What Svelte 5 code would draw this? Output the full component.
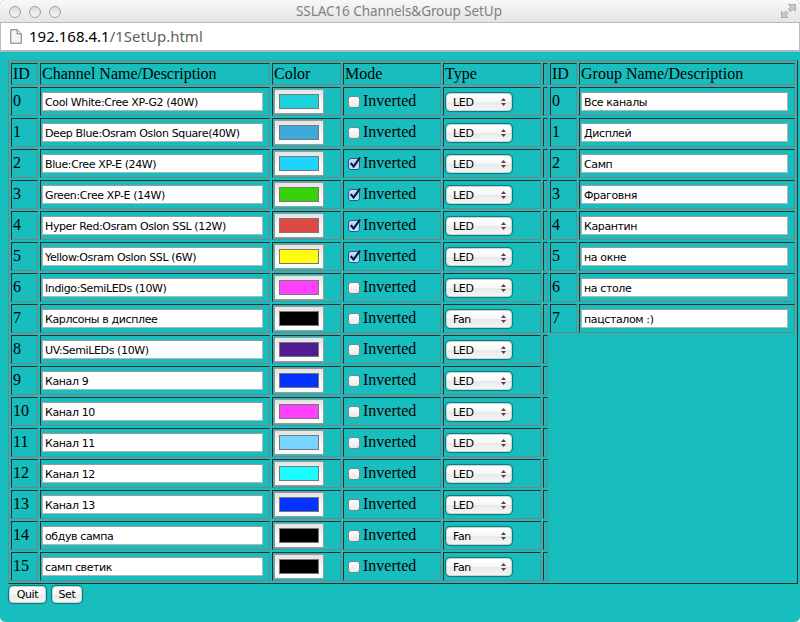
<script>
  const channels = [
    ['Cool White:Cree XP-G2 (40W)', '#1cd3dc', false, 'LED'],
    ['Deep Blue:Osram Oslon Square(40W)', '#3fa9dc', false, 'LED'],
    ['Blue:Cree XP-E (24W)', '#1fd3ff', true, 'LED'],
    ['Green:Cree XP-E (14W)', '#37d20a', true, 'LED'],
    ['Hyper Red:Osram Oslon SSL (12W)', '#dc4b41', true, 'LED'],
    ['Yellow:Osram Oslon SSL (6W)', '#fffd0b', true, 'LED'],
    ['Indigo:SemiLEDs (10W)', '#ff40ff', false, 'LED'],
    ['Карлсоны в дисплее', '#000000', false, 'Fan'],
    ['UV:SemiLEDs (10W)', '#531b93', false, 'LED'],
    ['Канал 9', '#0433ff', false, 'LED'],
    ['Канал 10', '#ff40ff', false, 'LED'],
    ['Канал 11', '#76d6ff', false, 'LED'],
    ['Канал 12', '#1cfdff', false, 'LED'],
    ['Канал 13', '#0433ff', false, 'LED'],
    ['обдув сампа', '#000000', false, 'Fan'],
    ['самп светик', '#000000', false, 'Fan']
  ];
  const groups = ['Все каналы', 'Дисплей', 'Самп', 'Фраговня', 'Карантин', 'на окне', 'на столе', 'пацсталом :)'];
</script>

<div class="window">
  <header class="titlebar">
    <div class="lights"><i></i><i></i><i></i></div>
    <span class="title">SSLAC16 Channels&amp;Group SetUp</span>
    <svg class="full" width="15" height="15" viewBox="0 0 15 15">
      <path d="M7.500 .5H14.500V7L12.300 5.200 9.500 7.600 7.200 5.200 9.700 2.800zM.5 7.500 2.500 9.300 4.800 7 7.200 9.400 5 11.700 7 13.500H.5z" fill="#c9c9c9" stroke="#a0a0a0" stroke-width=".8" />
    </svg>
  </header>
  <div class="address">
    <svg width="12" height="15" viewBox="0 0 12 15">
      <path d="M.75.75H7.300L11.250 4.700V14.250H.75z" fill="#f4f4f4" stroke="#777" />
      <path d="M7.200.8V4.800H11.200" fill="#fff" stroke="#777" />
    </svg>
    <span class="url">192.168.4.1<em>/1SetUp.html</em></span>
  </div>
  <main>
    <div class="table">
      <div class="cell">ID</div>
      <div class="cell">Channel Name/Description</div>
      <div class="cell">Color</div>
      <div class="cell">Mode</div>
      <div class="cell">Type</div>
      <div class="cell"></div>
      <div class="cell">ID</div>
      <div class="cell">Group Name/Description</div>
      {#each channels as [name, color, inverted, type], i}
        <div class="cell id">{i}</div>
        <div class="cell field"><input class="text" value={name} /></div>
        <div class="cell"><button class="color" aria-label="Color"><span style:background={color}></span></button></div>
        <div class="cell mode">
          <span class="check" class:on={inverted}>
            {#if inverted}
              <svg width="14" height="14" viewBox="0 0 14 14"><path d="M2.800 7.200 5.600 10.600 12 1.500" fill="none" stroke="#0a1530" stroke-width="2.100" /></svg>
            {/if}
          </span>
          <span class="label">Inverted</span>
        </div>
        <div class="cell type">
          <button class="select">{type}
            <svg width="5" height="8" viewBox="0 0 5 8"><path d="M0 3 2.500 0 5 3zM0 5 2.500 8 5 5z" fill="#4a4a4a" /></svg>
          </button>
        </div>
        <div class="cell"></div>
        {#if i < groups.length}
          <div class="cell id">{i}</div>
          <div class="cell field"><input class="text group" value={groups[i]} /></div>
        {:else}
          <div></div><div></div>
        {/if}
      {/each}
    </div>
    <div class="actions"><button class="quit">Quit</button><button class="set">Set</button></div>
  </main>
</div>

<style>
  :global(body) { background: #fff; overflow: hidden; }
  * { box-sizing: border-box; }
  .window { width: 800px; height: 622px; display: flex; flex-direction: column; overflow: hidden; border-radius: 5px; background: #18bdbe; }
  .titlebar { height: 22px; flex: none; display: flex; align-items: center; padding: 0 4px 0 8px; background: linear-gradient(#f8f8f8, #e5e5e5); }
  .lights { display: flex; gap: 7px; width: 107px; padding: 2px 0 0 1px; }
  .lights i { width: 12px; height: 12px; margin-right: 1px; border: 1px solid #a0a0a0; border-radius: 50%; background: linear-gradient(#dcdcdc, #f5f5f5); }
  .title { font: 13.500px/22px "Noto Sans", sans-serif; letter-spacing: -.07px; color: #808080; white-space: nowrap; margin-left: 181px; }
  .full { margin-left: auto; flex: none; }
  .address { height: 30px; flex: none; display: flex; align-items: center; gap: 7px; padding-left: 9px; background: #fff; border: 1px solid #b5b9c4; border-bottom: 2px solid #aeb6c4; }
  .address svg { flex: none; }
  .url { font: 15px/28px "Noto Sans", sans-serif; color: #000; white-space: nowrap; padding-bottom: 2px; }
  .url em { font-style: normal; color: #5f635c; }
  main { padding: 8px 2px 0 8px; }
  .table { width: 790px; display: grid; grid-template-columns: 27px 230px 69px 98px 98px 5px 27px 216px; grid-template-rows: 22px; grid-auto-rows: 29px; gap: 2px; padding: 2px; border: 1px solid; border-color: #808080 #2c2c2c #2c2c2c #808080; font: 16px/18px "Liberation Serif", serif; color: #000; }
  .cell { border: 1px solid; border-color: #2c2c2c #808080 #808080 #2c2c2c; padding: 1px; min-width: 0; white-space: nowrap; }
  .id { padding-top: 4px; }
  .field { padding-top: 4px; display: flex; align-items: flex-start; }
  .text { width: 221px; height: 19px; margin: 0; padding: 1px 2px 0; border: 1px solid #b4b4b4; border-top-color: #999; outline: 0; border-radius: 0; background: #fff; color: #000; font: 11px/15px "DejaVu Sans", sans-serif; letter-spacing: -.38px; }
  .group { width: 207px; }
  .color { display: block; width: 50px; height: 25px; padding: 4px; border: 1px solid #999; background: linear-gradient(#e3e3e3, #fafafa 60%); }
  .color span { display: block; width: 40px; height: 15px; border: 1px solid #777; }
  .mode { display: flex; align-items: flex-start; padding: 4px 0 0 4px; }
  .check { width: 12px; height: 12px; margin-top: 4px; flex: none; border: 1px solid #76898a; border-radius: 3px; background: linear-gradient(#fff, #e8e8e8); }
  .check.on { background: linear-gradient(#cfe5fa, #a4cff5 50%, #c4edff); border-color: #35558f; }
  .check svg { display: block; margin: -3px 0 0 -1px; }
  .label { margin-left: 3px; }
  .type { padding: 5px 0 0 2px; }
  .select { width: 66px; height: 18px; display: flex; align-items: center; justify-content: space-between; padding: 0 6px 0 6px; }
  .select svg { margin-right: -1px; }
  .select, .quit, .set { border: 1px solid #c8d4d4; border-radius: 4px; background: linear-gradient(#fff, #f6f6f6 50%, #e9e9e9 51%, #f5f5f5); box-shadow: 0 0 1px 1px #0c7778; color: #000; font: 11px/15px "DejaVu Sans", sans-serif; letter-spacing: -.35px; }
  .actions { display: flex; gap: 6px; padding: 2px 0 0 1px; }
  .actions button { height: 17px; padding: 0; }
  .quit { width: 37px; }
  .set { width: 30px; }
</style>
